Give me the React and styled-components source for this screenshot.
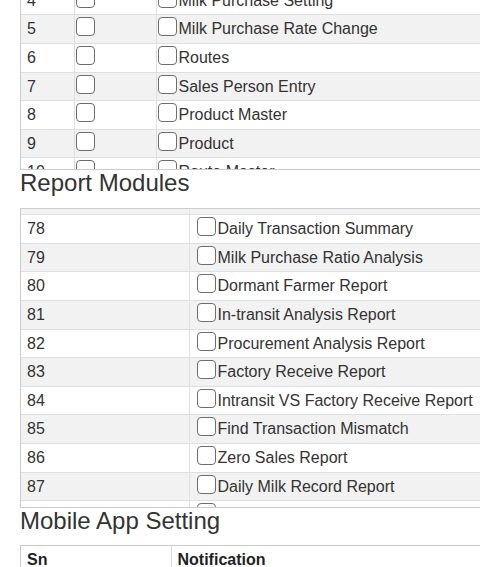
import React, { useLayoutEffect, useRef } from "react";
import styled, { createGlobalStyle } from "styled-components";

const Global = createGlobalStyle`
  html, body { margin: 0; padding: 0; overflow: hidden; background: #fff; scrollbar-width: none; }
  html::-webkit-scrollbar, body::-webkit-scrollbar { display: none; }
  body { font-family: "Liberation Sans", Arial, sans-serif; font-size: 16px; color: #333; }
`;

const Page = styled.div`
  width: 640px;
  padding: 0 20px 300px 20px;
`;

const Heading = styled.h3`
  margin: 0 0 11px 0;
  font-size: 24px;
  font-weight: 400;
  line-height: 1.1;
  color: #333;
`;

const ScrollBox = styled.div`
  height: ${(p) => p.$height || "300px"};
  box-sizing: border-box;
  overflow-y: auto;
  border: 1px solid #ccc;
  scrollbar-width: none;
  &::-webkit-scrollbar { display: none; }
`;

const Table = styled.table`
  width: 100%;
  table-layout: fixed;
  border-collapse: collapse;
`;

const Row = styled.tr`
  background: ${(p) => (p.$shade ? "#f2f2f2" : "#fff")};
`;

const Cell = styled.td`
  padding: 4px 6px 4px ${(p) => p.$padLeft ?? 6}px;
  line-height: 19.6px;
  border-top: 1px solid #dde0e3;
  border-right: 1px solid #dde0e3;
  white-space: nowrap;
  overflow: hidden;
  text-align: left;
  vertical-align: top;
`;

const HeadCell = styled(Cell).attrs({ as: "th" })`
  padding-top: ${(p) => p.$padTop ?? 4}px;
  font-weight: 700;
  color: #222;
  border-top: none;
`;

const Check = styled.input.attrs({ type: "checkbox" })`
  appearance: none;
  -webkit-appearance: none;
  width: 19px;
  height: 19px;
  box-sizing: border-box;
  margin: -4px 2px 0 0;
  border: 1.5px solid #6d6d6d;
  border-radius: 4px;
  background: #fff;
  vertical-align: -2px;
`;

const Label = styled.label`
  display: inline;
`;

const masterRows = [
  [1, "Company Setting"],
  [2, "Dairy Master"],
  [3, "Farmer Master"],
  [4, "Milk Purchase Setting"],
  [5, "Milk Purchase Rate Change"],
  [6, "Routes"],
  [7, "Sales Person Entry"],
  [8, "Product Master"],
  [9, "Product"],
  [10, "Route Master"],
  [11, "Vehicle Master"],
  [12, "Customer Master"],
  [13, "Bank Master"],
  [14, "Society Master"],
  [15, "Shift Master"],
  [16, "Unit Master"],
];

const reportRows = [
  [74, "Farmer Ledger Report"],
  [75, "Payment Register"],
  [76, "Shift Summary Report"],
  [77, "Milk Collection Report"],
  [78, "Daily Transaction Summary"],
  [79, "Milk Purchase Ratio Analysis"],
  [80, "Dormant Farmer Report"],
  [81, "In-transit Analysis Report"],
  [82, "Procurement Analysis Report"],
  [83, "Factory Receive Report"],
  [84, "Intransit VS Factory Receive Report"],
  [85, "Find Transaction Mismatch"],
  [86, "Zero Sales Report"],
  [87, "Daily Milk Record Report"],
  [88, "Milk Quality Report"],
  [89, "Sales Summary Report"],
  [90, "Stock Report"],
];

export default function App() {
  const box1 = useRef(null);
  const box2 = useRef(null);
  const row78 = useRef(null);

  useLayoutEffect(() => {
    const b1 = box1.current.getBoundingClientRect();
    window.scrollTo(0, window.scrollY + b1.bottom - 170);
    const r = row78.current.getBoundingClientRect();
    box2.current.scrollTop += Math.round(r.top - 214.6);
  }, []);

  return (
    <>
      <Global />
      <Page>
        <Heading>Master Modules</Heading>
        <ScrollBox ref={box1}>
          <Table>
            <colgroup>
              <col style={{ width: 53 }} />
              <col style={{ width: 82 }} />
              <col />
            </colgroup>
            <thead>
              <tr>
                <HeadCell $padTop={5}>Sn</HeadCell>
                <HeadCell $padTop={5} $padLeft={1}>
                  <Check />
                </HeadCell>
                <HeadCell $padTop={5}>Module</HeadCell>
              </tr>
            </thead>
            <tbody>
              {masterRows.map(([sn, name]) => (
                <Row key={sn} $shade={sn % 2 === 1}>
                  <Cell>{sn}</Cell>
                  <Cell $padLeft={1}>
                    <Check />
                  </Cell>
                  <Cell $padLeft={1}>
                    <Label>
                      <Check />
                      {name}
                    </Label>
                  </Cell>
                </Row>
              ))}
            </tbody>
          </Table>
        </ScrollBox>

        <Heading>Report Modules</Heading>
        <ScrollBox ref={box2}>
          <Table>
            <colgroup>
              <col style={{ width: 168 }} />
              <col />
            </colgroup>
            <tbody>
              {reportRows.map(([sn, name]) => (
                <Row key={sn} $shade={sn % 2 === 1} ref={sn === 78 ? row78 : undefined}>
                  <Cell>{sn}</Cell>
                  <Cell $padLeft={7}>
                    <Label>
                      <Check />
                      {name}
                    </Label>
                  </Cell>
                </Row>
              ))}
            </tbody>
          </Table>
        </ScrollBox>

        <Heading>Mobile App Setting</Heading>
        <ScrollBox $height="auto">
          <Table>
            <colgroup>
              <col style={{ width: 150 }} />
              <col />
            </colgroup>
            <thead>
              <tr>
                <HeadCell>Sn</HeadCell>
                <HeadCell>Notification</HeadCell>
              </tr>
            </thead>
            <tbody>
              <Row $shade>
                <Cell>1</Cell>
                <Cell>
                  <Label>
                    <Check />
                    Notification
                  </Label>
                </Cell>
              </Row>
            </tbody>
          </Table>
        </ScrollBox>
      </Page>
    </>
  );
}
